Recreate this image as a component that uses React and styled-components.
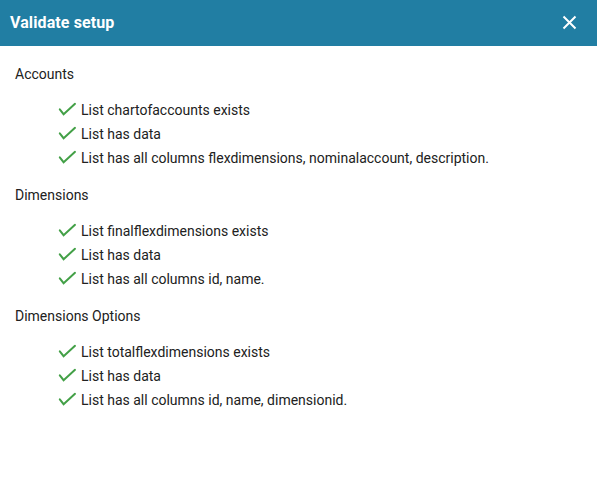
import React from "react";
import styled, { createGlobalStyle } from "styled-components";

const Global = createGlobalStyle`
  html, body { margin: 0; padding: 0; background: #fff; }
  body { font-family: Roboto, "Noto Sans", Arial, sans-serif; }
`;

const Dialog = styled.div`
  width: 597px;
  height: 492px;
  background: #fff;
  display: flex;
  flex-direction: column;
`;

const Header = styled.div`
  height: 46px;
  background: #217ea3;
  display: flex;
  align-items: center;
  justify-content: space-between;
  padding: 0 20px 2px 10px;
  box-sizing: border-box;
`;

const Title = styled.h2`
  margin: 0;
  font-size: 16px;
  font-weight: 700;
  color: #fff;
  letter-spacing: 0.1px;
`;

const CloseButton = styled.button`
  border: 0;
  background: none;
  padding: 0;
  width: 15px;
  height: 15px;
  display: flex;
  align-items: center;
  justify-content: center;
  cursor: pointer;
`;

const Body = styled.div`
  padding: 19px 15px 0 15px;
  display: flex;
  flex-direction: column;
  gap: 16px;
`;

const Section = styled.section`
  display: flex;
  flex-direction: column;
`;

const Heading = styled.div`
  font-size: 14px;
  line-height: 18px;
  color: #212121;
  margin-bottom: 15px;
`;

const List = styled.ul`
  list-style: none;
  margin: 0;
  padding: 0 0 0 42px;
  display: flex;
  flex-direction: column;
`;

const Item = styled.li`
  display: flex;
  align-items: center;
  height: 24px;
  font-size: 14px;
  color: #212121;
`;

const CheckIcon = () => (
  <svg width="24" height="24" viewBox="0 0 24 24" fill="none">
    <path d="M2.8 11.4 L6.6 16.2 L18 5.8" stroke="#43a047" strokeWidth="2" strokeLinecap="round" strokeLinejoin="miter" />
  </svg>
);

const CloseIcon = () => (
  <svg width="15" height="15" viewBox="0 0 15 15">
    <path d="M1.5 1.5 L13.5 13.5 M13.5 1.5 L1.5 13.5" stroke="#fff" strokeWidth="2" />
  </svg>
);

const sections = [
  {
    name: "Accounts",
    items: [
      "List chartofaccounts exists",
      "List has data",
      "List has all columns flexdimensions, nominalaccount, description.",
    ],
  },
  {
    name: "Dimensions",
    items: ["List finalflexdimensions exists", "List has data", "List has all columns id, name."],
  },
  {
    name: "Dimensions Options",
    items: [
      "List totalflexdimensions exists",
      "List has data",
      "List has all columns id, name, dimensionid.",
    ],
  },
];

export default function App() {
  return (
    <>
      <Global />
      <Dialog>
        <Header>
          <Title>Validate setup</Title>
          <CloseButton aria-label="Close">
            <CloseIcon />
          </CloseButton>
        </Header>
        <Body>
          {sections.map((s) => (
            <Section key={s.name}>
              <Heading>{s.name}</Heading>
              <List>
                {s.items.map((it) => (
                  <Item key={it}>
                    <CheckIcon />
                    <span>{it}</span>
                  </Item>
                ))}
              </List>
            </Section>
          ))}
        </Body>
      </Dialog>
    </>
  );
}
